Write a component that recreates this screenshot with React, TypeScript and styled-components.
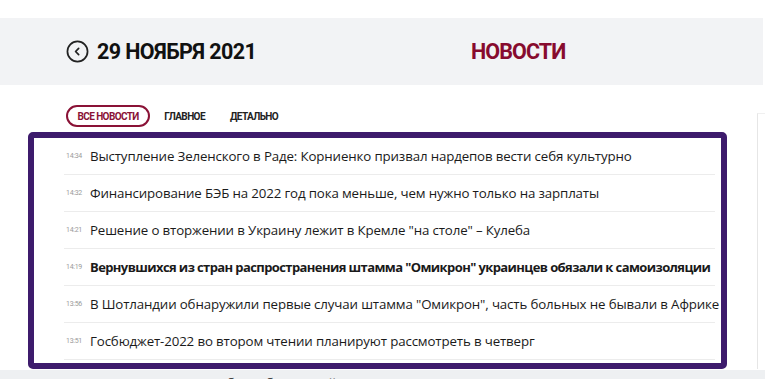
import styled, { createGlobalStyle } from "styled-components";

const GlobalStyle = createGlobalStyle`
  html, body {
    margin: 0;
    padding: 0;
    background: #fff;
    overflow: hidden;
  }
  body {
    font-family: "Open Sans", "Noto Sans", sans-serif;
    color: #1a1a1a;
  }
`;

const Page = styled.div`
  width: 765px;
  height: 379px;
  padding-top: 18px;
  box-sizing: border-box;
  overflow: hidden;
`;

const Header = styled.header`
  width: 763px;
  height: 67px;
  background: #f2f3f5;
  display: flex;
  align-items: center;
  padding-left: 66px;
  box-sizing: border-box;
`;

const DateBlock = styled.div`
  flex: 0 0 405px;
  display: flex;
  align-items: center;
  gap: 8px;
`;

const BackButton = styled.button`
  width: 23px;
  height: 23px;
  padding: 0;
  border: none;
  background: none;
  display: flex;
  align-items: center;
  justify-content: center;
  cursor: pointer;
`;

const DateText = styled.h2`
  margin: 0;
  font-family: Roboto, "Noto Sans", sans-serif;
  font-weight: 700;
  font-size: 21.5px;
  letter-spacing: -0.6px;
  color: #111;
`;

const SectionTitle = styled.h1`
  margin: 0;
  font-family: Roboto, "Noto Sans", sans-serif;
  font-weight: 700;
  font-size: 21.5px;
  letter-spacing: -0.9px;
  color: #870b2e;
`;

const Body = styled.div`
  display: flex;
  padding-top: 20px;
`;

const Column = styled.main`
  margin-left: 28px;
  width: 699px;
`;

const Tabs = styled.nav`
  display: flex;
  align-items: center;
  gap: 12px;
  padding-left: 38px;
  height: 22px;
  margin-bottom: 5px;
`;

const Tab = styled.a<{ $active?: boolean }>`
  font-family: Roboto, "Noto Sans", sans-serif;
  font-weight: 700;
  font-size: 10px;
  letter-spacing: -0.6px;
  text-transform: uppercase;
  color: ${(p) => (p.$active ? "#8a1236" : "#222")};
  border: 2px solid ${(p) => (p.$active ? "#8a1236" : "transparent")};
  border-radius: 12px;
  height: 22px;
  box-sizing: border-box;
  display: flex;
  align-items: center;
  padding: 0 ${(p) => (p.$active ? "9.5px" : "0")};
  margin-right: ${(p) => (p.$active ? "0" : "9px")};
  cursor: pointer;
`;

const Highlight = styled.section`
  border: 6px solid #3d1b6c;
  border-radius: 5px;
  background: #fff;
  padding: 0 6px 3px 30px;
`;

const Row = styled.div`
  display: flex;
  align-items: center;
  height: 37px;
  border-bottom: 1px solid #ececec;
  box-sizing: border-box;
`;

const Time = styled.span`
  flex: 0 0 24px;
  padding-left: 2px;
  font-family: Roboto, "Noto Sans", sans-serif;
  font-size: 7px;
  color: #9a9a9a;
  letter-spacing: -0.3px;
`;

const Title = styled.a<{ $bold?: boolean }>`
  font-size: ${(p) => (p.$bold ? "13px" : "13.3px")};
  font-weight: ${(p) => (p.$bold ? 700 : 400)};
  letter-spacing: ${(p) => (p.$bold ? "-0.6px" : "-0.14px")};
  color: #1a1a1a;
  white-space: nowrap;
  cursor: pointer;
`;

const Below = styled.div`
  margin-top: 1px;
  margin-left: -28px;
  width: 765px;
  background: #eef0f2;
  height: 40px;
  padding: 1px 0 0 90px;
  box-sizing: border-box;
`;

const Sidebar = styled.aside`
  margin-left: 30px;
  margin-top: 8px;
  width: 8px;
  height: 255px;
  border-left: 1px solid #e6e6e6;
  border-top: 1px solid #f0f0f0;
`;

const news = [
  { time: "14:34", title: "Выступление Зеленского в Раде: Корниенко призвал нардепов вести себя культурно" },
  { time: "14:32", title: "Финансирование БЭБ на 2022 год пока меньше, чем нужно только на зарплаты" },
  { time: "14:21", title: "Решение о вторжении в Украину лежит в Кремле \"на столе\" – Кулеба" },
  { time: "14:19", title: "Вернувшихся из стран распространения штамма \"Омикрон\" украинцев обязали к самоизоляции", bold: true },
  { time: "13:56", title: "В Шотландии обнаружили первые случаи штамма \"Омикрон\", часть больных не бывали в Африке" },
  { time: "13:51", title: "Госбюджет-2022 во втором чтении планируют рассмотреть в четверг" },
];

function BackIcon() {
  return (
    <svg width="23" height="23" viewBox="0 0 24 24" fill="none">
      <circle cx="12" cy="12" r="10.5" stroke="#222" strokeWidth="1.8" />
      <path d="M13.2 8.8 L10 12 L13.2 15.2" stroke="#222" strokeWidth="1.8" strokeLinecap="round" strokeLinejoin="round" />
    </svg>
  );
}

export default function App() {
  return (
    <Page>
      <GlobalStyle />
      <Header>
        <DateBlock>
          <BackButton aria-label="Предыдущий день">
            <BackIcon />
          </BackButton>
          <DateText>29 НОЯБРЯ 2021</DateText>
        </DateBlock>
        <SectionTitle>НОВОСТИ</SectionTitle>
      </Header>
      <Body>
        <Column>
          <Tabs>
            <Tab $active>Все новости</Tab>
            <Tab>Главное</Tab>
            <Tab>Детально</Tab>
          </Tabs>
          <Highlight>
            {news.map((n) => (
              <Row key={n.time}>
                <Time>{n.time}</Time>
                <Title $bold={n.bold}>{n.title}</Title>
              </Row>
            ))}
          </Highlight>
          <Below>
            <Title>Глава Зеленского требует объяснений</Title>
          </Below>
        </Column>
        <Sidebar />
      </Body>
    </Page>
  );
}
